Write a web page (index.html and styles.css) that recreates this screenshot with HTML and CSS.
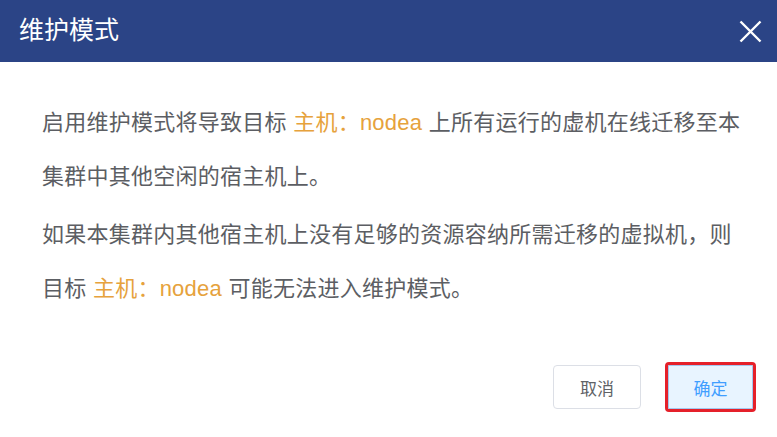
FILE: index.html
```html
<!DOCTYPE html>
<html lang="zh-CN">
<head>
<meta charset="utf-8">
<title>维护模式</title>
<link rel="stylesheet" href="styles.css">
</head>
<body>
<div class="dialog">
  <div class="dialog-header">
    <span class="dialog-title">维护模式</span>
    <button class="dialog-close" aria-label="关闭">
      <svg width="23" height="23" viewBox="0 0 23 23"><path d="M1.5 1.5 L21.5 21.5 M21.5 1.5 L1.5 21.5" stroke="#fff" stroke-width="2.4" fill="none"/></svg>
    </button>
  </div>
  <div class="dialog-body">
    <p class="msg">启用维护模式将导致目标 <span class="hl">主机：nodea</span> 上所有运行的虚机在线迁移至本集群中其他空闲的宿主机上。</p>
    <p class="msg">如果本集群内其他宿主机上没有足够的资源容纳所需迁移的虚拟机，则目标 <span class="hl">主机：nodea</span> 可能无法进入维护模式。</p>
  </div>
  <div class="dialog-footer">
    <button class="btn btn-default">取消</button>
    <button class="btn btn-primary">确定</button>
  </div>
</div>
</body>
</html>
```

FILE: styles.css
```css
* { box-sizing: border-box; }
html, body { margin: 0; padding: 0; background: #fff; }
body {
  font-family: "Liberation Sans", "Noto Sans CJK SC", sans-serif;
  width: 777px;
  height: 437px;
  overflow: hidden;
}
.dialog { width: 777px; }
.dialog-header {
  height: 62px;
  background: #2b4486;
  display: flex;
  align-items: center;
  justify-content: space-between;
  padding: 0 15px 0 19px;
}
.dialog-title {
  color: #fff;
  font-size: 25px;
  line-height: 1;
  padding-bottom: 2px;
}
.dialog-close {
  background: none;
  border: 0;
  padding: 0;
  width: 23px;
  height: 23px;
  display: flex;
  cursor: pointer;
}
.dialog-body {
  padding: 34px 30px 0 42px;
}
.msg {
  margin: 0;
  font-size: 22px;
  line-height: 54px;
  color: #5c5e63;
  letter-spacing: 0.25px;
}
.msg + .msg { margin-top: 4px; }
.hl { color: #e6a23c; }
.dialog-footer {
  display: flex;
  justify-content: flex-end;
  gap: 27px;
  padding: 49px 24px 0 0;
}
.btn {
  font-family: "Liberation Sans", "Noto Sans CJK SC", sans-serif;
  font-size: 17px;
  height: 44px;
  border-radius: 4px;
  padding: 0;
  cursor: pointer;
}
.btn-default {
  width: 88px;
  background: #fff;
  border: 1px solid #dcdfe6;
  color: #606266;
}
.btn-primary {
  width: 85px;
  background: #e8f4ff;
  border: 1px solid #a3c8f0;
  color: #409eff;
  outline: 3px solid #e5202a;
  border-radius: 1px;
}
```
